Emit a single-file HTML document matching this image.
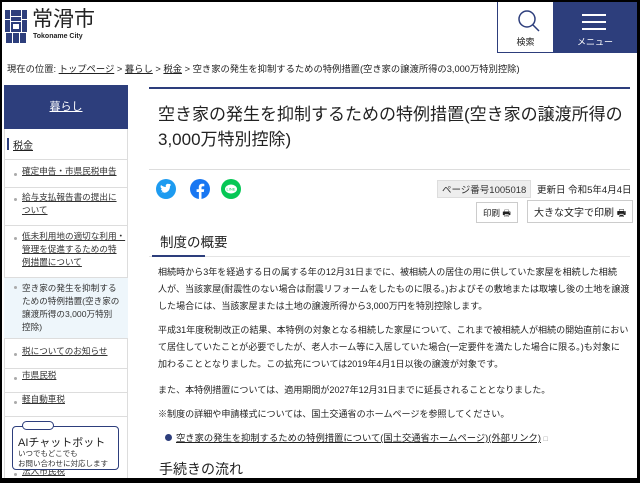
<!DOCTYPE html>
<html><head><meta charset="utf-8"><style>
*{margin:0;padding:0;box-sizing:border-box}
body{width:640px;height:483px;overflow:hidden;background:#000;font-family:"Liberation Sans","Noto Sans CJK JP",sans-serif;color:#222;position:relative}
#pg{position:absolute;left:2px;top:2px;width:635px;height:476px;background:#fff;overflow:hidden}
.a{position:absolute;white-space:nowrap}
u{text-decoration:underline}
.sb{position:absolute;left:2px;width:124px;border-bottom:1px solid #ddd;font-size:8.6px;line-height:13px;padding-left:18px;color:#333;white-space:nowrap}
.sb:before{content:"";position:absolute;left:10px;top:8px;width:3px;height:3px;border-radius:50%;background:#aaa}
.p{position:absolute;left:156px;width:476px;font-size:9.05px;line-height:17px;color:#222;white-space:nowrap}
.btn{position:absolute;border:1px solid #ccc;background:#fff;font-size:10px;color:#222;padding:3px 6px}
</style></head><body><div id="pg">
<svg class="a" style="left:3px;top:8px" width="22" height="34" viewBox="0 0 22 34"><g fill="#2d3e7c"><rect x="0" y="0" width="5" height="9"/><rect x="6" y="0" width="10" height="6"/><rect x="17" y="0" width="5" height="9"/><rect x="0" y="10" width="5" height="12"/><rect x="17" y="10" width="5" height="12"/><rect x="6" y="7" width="10" height="4"/><rect x="6" y="12" width="10" height="2"/><rect x="6" y="19" width="10" height="3"/><rect x="1" y="23" width="6" height="10"/><rect x="8" y="23" width="6" height="10"/><rect x="15" y="23" width="6" height="10"/><rect x="6" y="14" width="2" height="5"/><rect x="14" y="14" width="2" height="5"/></g></svg>
<div class="a" style="left:30px;top:5px;font-size:21px;line-height:25px;color:#222">常滑市</div>
<div class="a" style="left:31px;top:31px;font-size:7px;font-weight:bold;color:#222">Tokoname City</div>
<div class="a" style="left:495px;top:-1px;width:57px;height:52px;border:1px solid #2d3e7c;background:#fff"></div>
<svg class="a" style="left:515px;top:7px" width="24" height="24" viewBox="0 0 24 24"><circle cx="10" cy="10" r="8" fill="none" stroke="#2d3e7c" stroke-width="1.5"/><line x1="16" y1="16" x2="22" y2="22" stroke="#2d3e7c" stroke-width="1.5"/></svg>
<div class="a" style="left:495px;top:33px;width:57px;text-align:center;font-size:9px;color:#222">検索</div>
<div class="a" style="left:551px;top:-1px;width:84px;height:52px;background:#2d3e7c"></div>
<div class="a" style="left:580px;top:12px;width:24px;height:1.5px;background:#fff"></div>
<div class="a" style="left:580px;top:19px;width:24px;height:1.5px;background:#fff"></div>
<div class="a" style="left:580px;top:26px;width:24px;height:1.5px;background:#fff"></div>
<div class="a" style="left:551px;top:33px;width:84px;text-align:center;font-size:9px;color:#fff">メニュー</div>
<div class="a" style="left:5px;top:59px;font-size:9.3px;color:#222">現在の位置: <u>トップページ</u> &gt; <u>暮らし</u> &gt; <u>税金</u> &gt; 空き家の発生を抑制するための特例措置(空き家の譲渡所得の3,000万特別控除)</div>
<div class="a" style="left:2px;top:83px;width:124px;height:44px;background:#2d3e7c;color:#fff;font-size:11px;text-align:center;line-height:44px"><u>暮らし</u></div>
<div class="a" style="left:2px;top:127px;width:124px;height:355px;border-left:1px solid #ddd;border-right:1px solid #ddd"></div>
<div class="a" style="left:5px;top:136px;width:2px;height:12px;background:#2d3e7c"></div>
<div class="a" style="left:11px;top:135px;font-size:10px;color:#222"><u>税金</u></div>
<div class="a" style="left:2px;top:157px;width:124px;border-bottom:1px solid #ddd"></div>
<div class="sb" style="top:163px;height:23px"><u>確定申告・市県民税申告</u></div>
<div class="sb" style="top:188px;height:36px;padding-top:1px"><u>給与支払報告書の提出に<br>ついて</u></div>
<div class="sb" style="top:227px;height:49px;padding-top:1px"><u>低未利用地の適切な利用・<br>管理を促進するための特<br>例措置について</u></div>
<div class="sb" style="top:276px;height:61px;background:#eef6fb;padding-top:4px">空き家の発生を抑制する<br>ための特例措置(空き家の<br>譲渡所得の3,000万特別<br>控除)</div>
<div class="sb" style="top:343px;height:24px"><u>税についてのお知らせ</u></div>
<div class="sb" style="top:367px;height:24px"><u>市県民税</u></div>
<div class="sb" style="top:391px;height:24px"><u>軽自動車税</u></div>
<div class="sb" style="top:463px;height:24px"><u>法人市民税</u></div>
<div class="a" style="left:10px;top:424px;width:107px;height:44px;background:#fff;border:1px solid #2d3e7c;border-radius:4px"></div>
<div class="a" style="left:20px;top:419px;width:32px;height:9px;background:#fff;border:1px solid #2d3e7c;border-radius:5px"></div>
<div class="a" style="left:16px;top:432px;font-size:11px;color:#222">AIチャットボット</div>
<div class="a" style="left:16px;top:447px;font-size:7.5px;line-height:10px;color:#333">いつでもどこでも<br>お問い合わせに対応します</div>
<div class="a" style="left:147px;top:85px;width:481px;height:2px;background:#2d3e7c"></div>
<div class="a" style="left:156px;top:100px;font-size:17px;line-height:25px;color:#222">空き家の発生を抑制するための特例措置(空き家の譲渡所得の<br>3,000万特別控除)</div>
<div class="a" style="left:147px;top:167px;width:481px;height:1px;background:#ddd"></div>
<svg class="a" style="left:154px;top:177px" width="90" height="20" viewBox="0 0 90 20"><circle cx="10" cy="10" r="10" fill="#1d9bf0"/><path d="M5 13c4 2 9 0 9-6l1-1-1 0 1-1-2 0c-2-1-4 1-3 3-2 0-4-1-5-2-1 2 0 3 1 4h-1c0 1 1 2 2 2h-1c0 1 1 1 2 1-1 1-2 1-3 0z" fill="#fff"/><circle cx="44" cy="10" r="10" fill="#1877f2"/><path d="M45.5 20v-7h2.3l.4-2.7h-2.7V8.6c0-.8.3-1.3 1.4-1.3h1.4V4.9c-.3 0-1.1-.1-2.1-.1-2 0-3.4 1.2-3.4 3.5v2H40.6V13h2.3v7z" fill="#fff"/><circle cx="75" cy="10" r="10" fill="#06c755"/><ellipse cx="75" cy="10" rx="6" ry="4.5" fill="#fff"/><text x="75" y="11.5" font-size="4" fill="#06c755" text-anchor="middle" font-family="Liberation Sans">LINE</text></svg>
<div class="a" style="left:435px;top:178px;background:#eee;border:1px solid #ddd;font-size:9.5px;padding:1px 4px;color:#333">ページ番号1005018</div>
<div class="a" style="left:535px;top:180px;font-size:9.5px;color:#222">更新日 令和5年4月4日</div>
<div class="btn" style="left:474px;top:200px;height:21px;font-size:8.5px">印刷 <span style="font-size:9px">🖶</span></div>
<div class="btn" style="left:525px;top:198px;height:23px;font-size:10px">大きな文字で印刷 <span>🖶</span></div>
<div class="a" style="left:158px;top:229px;font-size:13.5px;color:#222">制度の概要</div>
<div class="a" style="left:147px;top:254px;width:481px;height:1px;background:#e4e4e4"></div>
<div class="a" style="left:150px;top:253px;width:53px;height:2px;background:#2d3e7c"></div>
<div class="p" style="top:262px">相続時から3年を経過する日の属する年の12月31日までに、被相続人の居住の用に供していた家屋を相続した相続<br>人が、当該家屋(耐震性のない場合は耐震リフォームをしたものに限る。)およびその敷地または取壊し後の土地を譲渡<br>した場合には、当該家屋または土地の譲渡所得から3,000万円を特別控除します。</div>
<div class="p" style="top:320px">平成31年度税制改正の結果、本特例の対象となる相続した家屋について、これまで被相続人が相続の開始直前におい<br>て居住していたことが必要でしたが、老人ホーム等に入居していた場合(一定要件を満たした場合に限る。)も対象に<br>加わることとなりました。この拡充については2019年4月1日以後の譲渡が対象です。</div>
<div class="p" style="top:380px">また、本特例措置については、適用期間が2027年12月31日までに延長されることとなりました。</div>
<div class="p" style="top:404px">※制度の詳細や申請様式については、国土交通省のホームページを参照してください。</div>
<div class="a" style="left:163px;top:432px;width:7px;height:7px;border-radius:50%;background:#2d3e7c"></div>
<div class="a" style="left:174px;top:428px;font-size:9.3px;color:#222"><u>空き家の発生を抑制するための特例措置について(国土交通省ホームページ)(外部リンク)</u> <span style="font-size:7px;color:#888">□</span></div>
<div class="a" style="left:157px;top:457px;font-size:14px;color:#222">手続きの流れ</div>
</div></body></html>
